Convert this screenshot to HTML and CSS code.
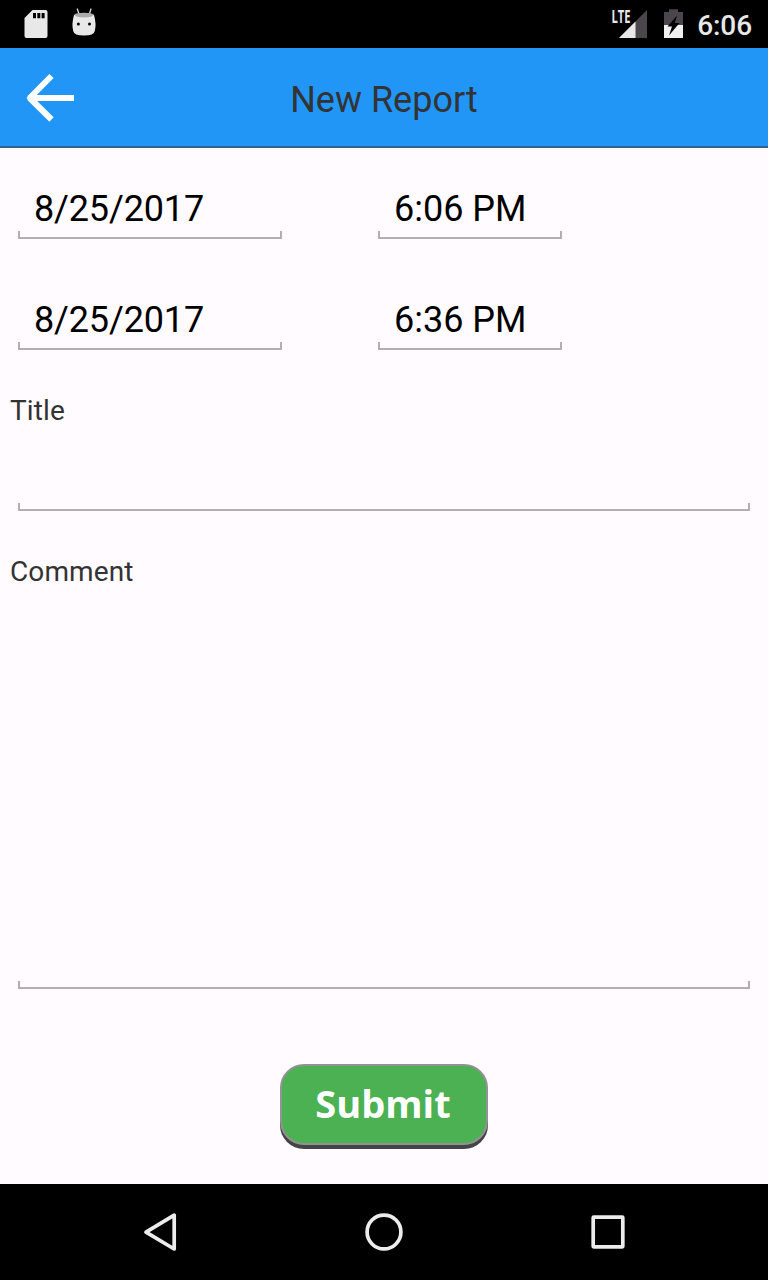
FILE: index.html
```
<!DOCTYPE html>
<html lang="en">
<head>
<meta charset="utf-8">
<title>New Report</title>
<link rel="stylesheet" href="styles.css">
</head>
<body>
<div class="screen">
  <div class="status">
    <svg class="status-left" width="100" height="48" viewBox="0 0 100 48">
      <path fill="#e8e8e8" fill-rule="evenodd" d="M32.5 10H45.500Q47.500 10 47.500 12V36Q47.500 38 45.500 38H26.500Q24.500 38 24.500 36V18ZM33 13V18.300H36V13ZM37.300 13V18.300H40.300V13ZM41.600 13V18.300H44.600V13Z"/>
      <path fill="none" stroke="#d8d8d8" stroke-width="1.300" stroke-linecap="round" d="M77.300 9L79 14M91 9L89.300 14"/>
      <path fill="#e8e8e8" d="M74 15Q84 11.500 94 15Q96.600 24 94.800 31Q94 35.500 84 35.500Q74 35.500 73.200 31Q71.400 24 74 15Z"/>
      <path fill="#ababab" d="M74.500 14.500Q76 12.700 84 12.700Q92 12.700 93.600 14.500Q93 17.500 84 17.500Q75 17.500 74.500 14.500Z"/>
      <circle cx="78.400" cy="24" r="1.500"/><circle cx="89.500" cy="24" r="1.500"/>
    </svg>
    <div class="status-right">
      <svg width="80" height="48" viewBox="608 0 80 48">
        <path fill="#4b464b" d="M647 10V38H619Z"/>
        <path fill="#e8e8e8" d="M635.500 21.500V38H619Z"/>
        <text class="lte" x="611.500" y="22.700" textLength="19" lengthAdjust="spacingAndGlyphs">LTE</text>
        <path fill="#4b464b" d="M664 12H669V9.300H678V12H683V25H664Z"/>
        <path fill="#f0f0f0" d="M664 25H683V38H664Z"/>
        <path d="M677 15.500L667.500 26.500H672L669 35.500L679.500 23H674.800Z"/>
      </svg>
      <span class="clock">6:06</span>
    </div>
  </div>
  <header class="appbar">
    <svg class="back" width="100" height="98" viewBox="0 0 100 98">
      <path fill="none" stroke="#fff" stroke-width="6" stroke-linejoin="bevel" d="M74 50H31M51.500 28L29.700 50L51.500 71.500"/>
      <path fill="#fff" d="M26.500 50L34 43V57Z"/>
    </svg>
    <h1 class="heading">New Report</h1>
  </header>
  <main class="form">
    <div class="row">
      <div class="field date"><span class="value">8/25/2017</span><span class="rail"></span></div>
      <div class="field time"><span class="value">6:06 PM</span><span class="rail"></span></div>
    </div>
    <div class="row">
      <div class="field date"><span class="value">8/25/2017</span><span class="rail"></span></div>
      <div class="field time"><span class="value">6:36 PM</span><span class="rail"></span></div>
    </div>
    <div class="group">
      <span class="label">Title</span>
      <div class="field single"><span class="rail"></span></div>
    </div>
    <div class="group">
      <span class="label">Comment</span>
      <div class="field multi"><span class="rail"></span></div>
    </div>
    <button class="submit">Submit</button>
  </main>
  <nav class="navbar">
    <svg width="768" height="96" viewBox="0 0 768 96">
      <g fill="none" stroke="#ececec" stroke-width="3.700" stroke-linejoin="round">
        <path d="M174.200 31.200V65L146 48.200Z"/>
        <circle cx="384" cy="48" r="16.900"/>
        <rect x="593.200" y="33.200" width="29.600" height="29.600" rx=".5"/>
      </g>
    </svg>
  </nav>
</div>
</body>
</html>
```
FILE: styles.css
```
body { margin: 0; font-family: Roboto, sans-serif; }
.screen {
  width: 768px;
  height: 1280px;
  display: flex;
  flex-direction: column;
  background: #fffbff;
  overflow: hidden;
}
.status {
  height: 48px;
  flex: none;
  display: flex;
  justify-content: space-between;
  background: #000;
}
.status-right { display: flex; padding-right: 16px; }
.clock {
  margin-left: 9px;
  font-size: 28px;
  line-height: 52px;
  font-weight: 500;
  letter-spacing: -0.1px;
  color: #e8e8e8;
}
.lte { font: bold 17.5px "Open Sans", sans-serif; fill: #e8e8e8; }
.appbar {
  box-sizing: border-box;
  height: 100px;
  flex: none;
  display: grid;
  grid-template-columns: 100px 1fr 100px;
  background: #2196f7;
  border-bottom: 2px solid #35608f;
}
.heading {
  margin: 0;
  font-size: 36px;
  font-weight: 400;
  line-height: 105px;
  text-align: center;
  color: #333;
}
.form {
  flex: 1;
  display: flex;
  flex-direction: column;
  padding-top: 40px;
}
.row { display: flex; gap: 96px; padding-left: 18px; margin-bottom: 60px; }
.row + .row { margin-bottom: 44px; }
.field { display: flex; flex-direction: column; justify-content: flex-end; }
.date { width: 264px; }
.time { width: 184px; }
.value { height: 43px; padding-left: 16px; font-size: 36px; line-height: 42px; color: #000; }
.date .value { letter-spacing: -0.15px; }
.rail {
  box-sizing: border-box;
  height: 8px;
  border: solid #b2afb2;
  border-width: 0 2px 2px;
}
.group { margin-bottom: 44px; }
.label { display: block; padding-left: 10px; font-size: 28px; line-height: 33px; letter-spacing: 0.1px; color: #333; }
.single, .multi { margin: 0 18px; }
.single { height: 84px; }
.multi { height: 401px; }
.submit {
  box-sizing: border-box;
  width: 208px;
  height: 81px;
  margin: 31px auto 0;
  padding: 0 2px 3px 0;
  border: 2px solid #929292;
  border-radius: 24px;
  background: #4bb153;
  box-shadow: 0 4px 0 #444;
  font: bold 38px/74px "Open Sans", sans-serif;
  color: #fff;
}
.navbar { height: 96px; flex: none; background: #000; }
```
